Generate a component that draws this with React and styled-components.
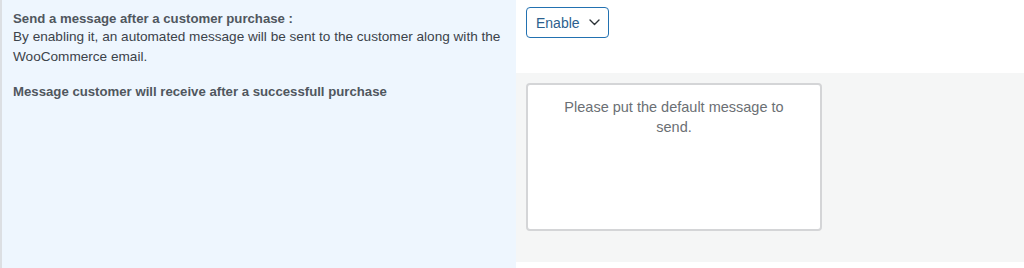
import styled, { createGlobalStyle } from "styled-components";

const GlobalStyle = createGlobalStyle`
  html, body {
    margin: 0;
    padding: 0;
    background: #fff;
  }
  body {
    font-family: "Liberation Sans", Arial, sans-serif;
    color: #3c434a;
  }
`;

const Table = styled.div`
  display: grid;
  grid-template-columns: 516px 1fr;
  grid-template-rows: 73px 189px 6px;
  width: 1024px;
  height: 268px;
`;

const Label = styled.div`
  background: #eef6fe;
  border-left: 2px solid #dcdfe3;
  padding: ${(p) => p.$pad || "11px 11px 0"};
  box-sizing: border-box;
`;

const Title = styled.div`
  font-size: 13.2px;
  font-weight: 700;
  line-height: 16px;
  color: #50575e;
`;

const Desc = styled.div`
  font-size: 13.6px;
  line-height: 20px;
  color: #3c434a;
`;

const Field = styled.div`
  background: ${(p) => (p.$muted ? "#f5f6f6" : "#fff")};
  padding: ${(p) => p.$pad || "0 10px"};
`;

const Select = styled.div`
  display: inline-flex;
  align-items: center;
  gap: 9px;
  height: 31px;
  box-sizing: border-box;
  padding: 0 8px 0 9px;
  border: 1.5px solid #2271b1;
  border-radius: 4px;
  color: #2c5f8e;
  font-size: 14px;
  background: #fff;
`;

const TextBox = styled.div`
  width: 296px;
  height: 148px;
  box-sizing: border-box;
  border: 2px solid #d4d5d7;
  border-radius: 4px;
  background: #fff;
  padding: 12px 30px;
  text-align: center;
  font-size: 14.5px;
  line-height: 20px;
  color: #6b6f74;
`;

const Spacer = styled.div`
  background: ${(p) => p.$bg};
  border-left: ${(p) => (p.$edge ? "2px solid #dcdfe3" : "none")};
`;

export default function App() {
  return (
    <>
      <GlobalStyle />
      <Table>
        <Label>
          <Title>Send a message after a customer purchase :</Title>
          <Desc>
            By enabling it, an automated message will be sent to the customer
            along with the WooCommerce email.
          </Desc>
        </Label>
        <Field $pad="7px 10px 0">
          <Select>
            Enable
            <svg width="11" height="7" viewBox="0 0 11 7" fill="none">
              <path
                d="M1 1l4.5 4.5L10 1"
                stroke="#2c3338"
                strokeWidth="1.4"
                strokeLinecap="round"
                strokeLinejoin="round"
              />
            </svg>
          </Select>
        </Field>
        <Label $pad="11px 11px 0">
          <Title>Message customer will receive after a successfull purchase</Title>
        </Label>
        <Field $muted $pad="10px 10px 0">
          <TextBox>Please put the default message to send.</TextBox>
        </Field>
        <Spacer $bg="#eef6fe" $edge />
        <Spacer $bg="#fff" />
      </Table>
    </>
  );
}
